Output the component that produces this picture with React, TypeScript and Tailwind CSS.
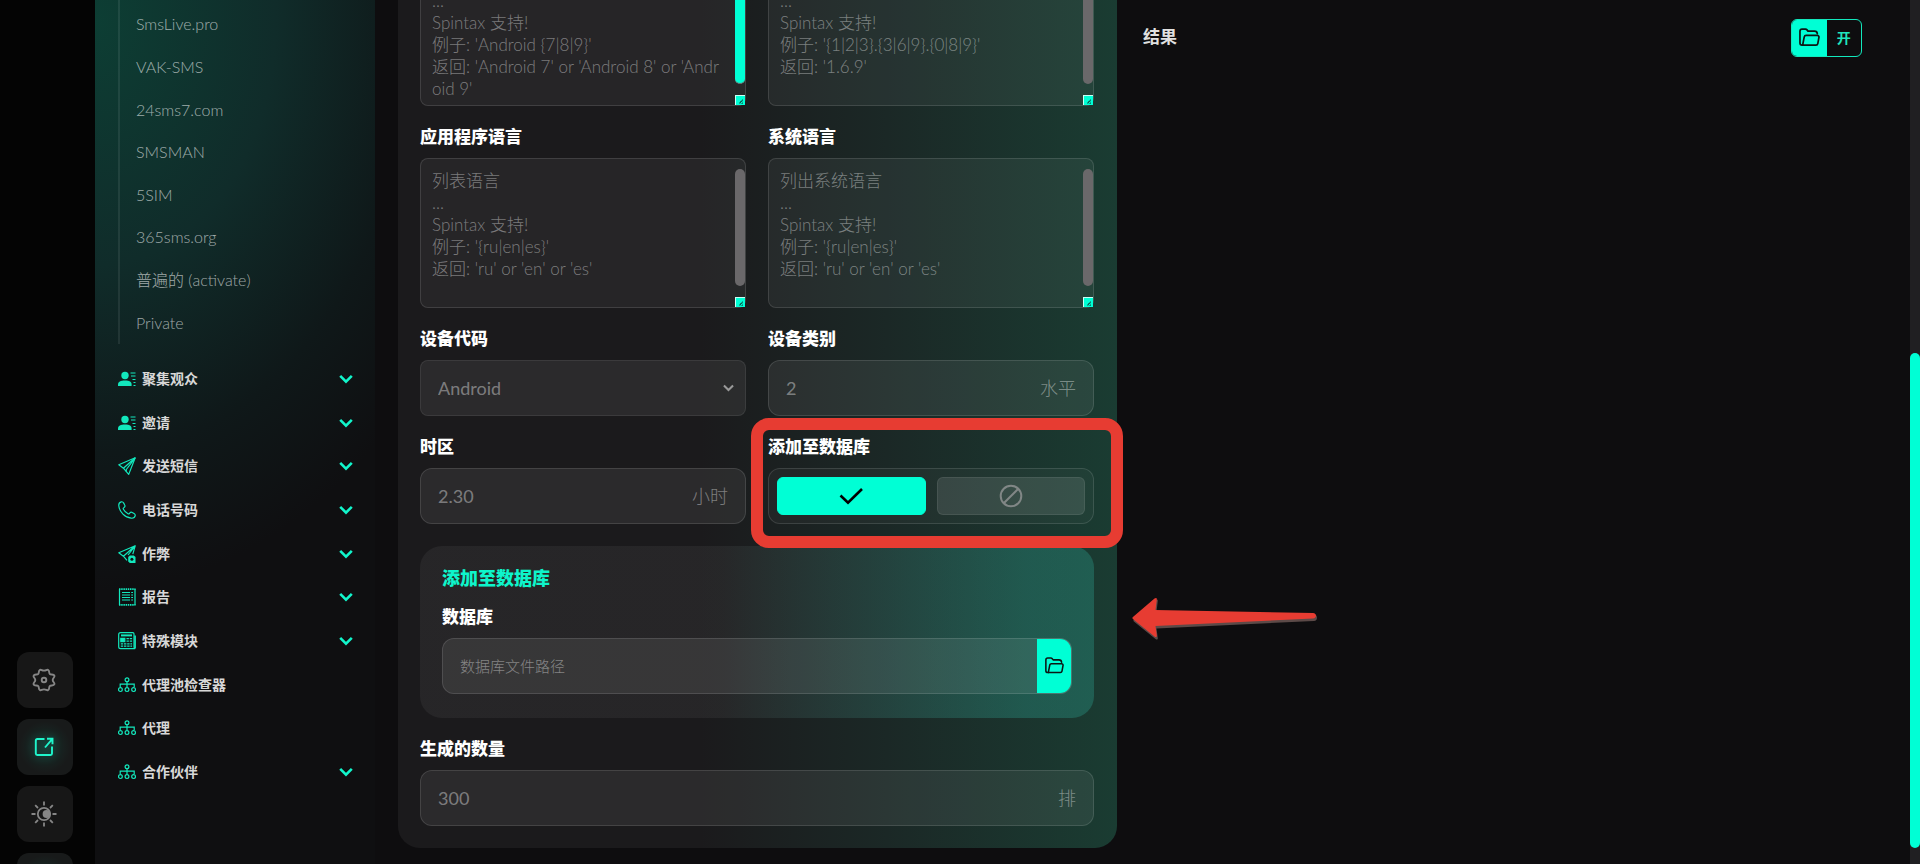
import { useState, type ReactNode } from "react";

interface MenuItem {
  label: string;
  icon: ReactNode;
  open?: boolean;
}

const services = [
  "SmsLive.pro",
  "VAK-SMS",
  "24sms7.com",
  "SMSMAN",
  "5SIM",
  "365sms.org",
  "普遍的 (activate)",
  "Private",
];

const Chevron = ({ className }: { className: string }) => (
  <svg viewBox="0 0 14 10" fill="none" stroke="currentColor" strokeWidth="2.6" className={className}>
    <path d="M1.2 1.8 7 7.6l5.8-5.8" />
  </svg>
);

const FolderIcon = ({ className }: { className: string }) => (
  <svg viewBox="0 0 22 20" fill="none" stroke="currentColor" strokeWidth="1.8" strokeLinejoin="round" strokeLinecap="round" className={className}>
    <path d="M4.3 18H3.2A2.2 2.2 0 0 1 1 15.800V3.400C1 2.100 1.900 1.200 3.200 1.200h3.600c.7 0 1.200.3 1.600.8l1 1.300h6.800c1.700 0 2.900 1 3 2.700" />
    <path d="M7.400 7.800h11.800c1.100 0 1.900.9 1.700 2l-1.200 6.600c-.2 1-1 1.600-1.900 1.600H3.800l1.700-8.700c.2-.9 1-1.500 1.900-1.500Z" />
  </svg>
);

const PersonIcon = () => (
  <svg viewBox="0 0 18 16" fill="currentColor" className="w-[18px]">
    <circle cx="7" cy="4.500" r="3.700" />
    <path d="M0 15v-1.500C0 10.600 2.600 9.500 7 9.500s6.600 1.100 6.600 4V15Z" />
    <path d="M12.500 1.500h5v1h-5zM13 4.500h4.500v1H13zM14.500 8h3v1h-3zM15.500 11h2v1h-2zM15.500 14h2v1h-2z" />
  </svg>
);

const PlaneIcon = () => (
  <svg viewBox="0 0 18 18" fill="none" stroke="currentColor" strokeWidth="1.200" strokeLinejoin="round" className="w-[18px]">
    <path d="M17.200.8.8 7.800l4.600 3.400 5.300 6.200L17.200.8Z" />
    <path d="M17.200.8 5.400 11.200M17.200.8 8.300 12.500l-.1 2" />
  </svg>
);

const CheatIcon = () => (
  <svg viewBox="0 0 18 18" className="w-[18px]">
    <g fill="none" stroke="currentColor" strokeWidth="1.200" strokeLinejoin="round">
      <path d="M10 10 17.200.8.8 7.800l4.600 3.400 3.600 4.200M17.200.8 5.400 11.200M17.200.8l-2.400 8.400" />
    </g>
    <path d="M10.200 12l1.600-1.500h4L17.500 12v6h-5.700l-1.600-1.600Z" fill="currentColor" />
    <circle cx="13.900" cy="14.200" r="1.500" fill="#0f1213" />
  </svg>
);

const PhoneIcon = () => (
  <svg viewBox="0 0 18 18" fill="none" stroke="currentColor" strokeWidth="1.200" strokeLinejoin="round" className="w-[18px]">
    <path d="M3.300.8c-1.500.3-2.700 2-2.500 4 .7 6.300 6.200 11.800 12.400 12.400 2 .2 3.700-1 4-2.500.2-1-.3-1.700-1.200-2.200l-1.800-1c-.9-.5-1.700-.3-2.300.4l-.6.7c-.3.4-.8.5-1.300.2a12 12 0 0 1-4.600-4.600c-.3-.5-.2-1 .2-1.300l.7-.6c.7-.6.9-1.400.4-2.300l-1-1.900C5.200 1.100 4.400.6 3.300.8Z" />
  </svg>
);

const ReportIcon = () => (
  <svg viewBox="0 0 18 18" fill="none" stroke="currentColor" strokeWidth="1.200" className="w-[18px]">
    <path d="M1.500 1v16M17 1v16" />
    <path d="M1 1.200h16.500M1 16.800h16.500" strokeWidth="1.800" strokeDasharray="1.500 .7" />
    <path d="M4 4.500h8M4 7h8M4 9.500h8M4 12h8M13.200 4.500h1.800M13.200 7h1.800M13.200 9.500h1.800M13.200 12h1.800" />
  </svg>
);

const ModuleIcon = () => (
  <svg viewBox="0 0 18 18" fill="none" stroke="currentColor" strokeWidth="1.200" className="w-[18px]">
    <path d="M16 2v13c0 1 .3 1.600 1.200 1.600H2.600c-1.200 0-1.900-.7-1.900-1.900V2.600C.7 1.400 1.400.7 2.600.7h12.100c.8 0 1.300.5 1.300 1.300ZM17.300 3.500v13" />
    <path d="M3 3.400h11" strokeWidth="2" />
    <path d="M2.800 6.400h4v3.200h-4z" fill="currentColor" />
    <path d="M8.500 6.600h5.600M8.500 9.200h5.600M2.800 11.800h11.300M2.800 14.200h11.300" strokeDasharray="2.400 .8" />
  </svg>
);

const TreeIcon = () => (
  <svg viewBox="0 0 18 16" fill="none" stroke="currentColor" strokeWidth="1.200" className="w-[18px]">
    <circle cx="9" cy="2.800" r="1.900" />
    <path d="M9 4.700V10M2.200 10V7.200h14V10" />
    <circle cx="2.400" cy="12.600" r="1.900" />
    <circle cx="9" cy="12.600" r="1.900" />
    <circle cx="15.600" cy="12.600" r="1.900" />
  </svg>
);

const GearIcon = () => (
  <svg viewBox="0 0 24 24" fill="none" stroke="currentColor" strokeWidth="1.900" strokeLinejoin="round" className="w-6">
    <path d="M8 1.900c1.200-.6 1.700.7 4 .7s2.800-1.300 4-.7c1.900.9.7 3 1.700 4 1.100 1.200 4-.1 4.700 1.800.6 1.700-1.700 2.200-1.700 4.300s2.300 2.600 1.700 4.300c-.7 1.900-3.600.6-4.700 1.800-1 1 .2 3.100-1.700 4-1.200.6-1.700-.7-4-.7s-2.800 1.300-4 .7c-1.900-.9-.7-3-1.700-4-1.100-1.200-4 .1-4.700-1.800C1 14.600 3.300 14.100 3.300 12S1 9.400 1.600 7.700c.7-1.900 3.600-.6 4.700-1.800 1-1-.2-3.100 1.700-4Z" />
    <circle cx="12" cy="12" r="2.300" />
  </svg>
);

const ShareIcon = () => (
  <svg viewBox="0 0 20 20" fill="none" stroke="currentColor" strokeWidth="1.900" className="w-5 drop-shadow-[0_0_5px_rgba(0,255,212,0.35)]">
    <path d="M10.500 2H3.200C2.400 2 1.800 2.600 1.800 3.400v13.200c0 .8.600 1.400 1.400 1.400h13.400c.8 0 1.400-.6 1.400-1.400V9.500" />
    <path d="M11 10.500 18.200 2.200M13 1.800h5.500v5.500" />
  </svg>
);

const SunIcon = () => (
  <svg viewBox="0 0 26 26" fill="none" stroke="currentColor" strokeWidth="1.800" className="w-[26px]">
    <circle cx="13" cy="13" r="6.200" />
    <circle cx="15.600" cy="13" r="4" fill="currentColor" stroke="none" />
    <path d="M13 .5v4M13 21.500v4M.5 13h4M21.500 13h4M4.200 4.200 7 7M19 19l2.800 2.800M4.200 21.800 7 19M19 7l2.800-2.800" />
  </svg>
);

const menu: MenuItem[] = [
  { label: "聚集观众", icon: <PersonIcon />, open: true },
  { label: "邀请", icon: <PersonIcon />, open: true },
  { label: "发送短信", icon: <PlaneIcon />, open: true },
  { label: "电话号码", icon: <PhoneIcon />, open: true },
  { label: "作弊", icon: <CheatIcon />, open: true },
  { label: "报告", icon: <ReportIcon />, open: true },
  { label: "特殊模块", icon: <ModuleIcon />, open: true },
  { label: "代理池检查器", icon: <TreeIcon /> },
  { label: "代理", icon: <TreeIcon /> },
  { label: "合作伙伴", icon: <TreeIcon />, open: true },
];

const Rail = () => (
  <aside className="flex h-full w-[95px] shrink-0 flex-col items-center justify-end bg-[#040404] pr-[5px]">
    <div className="-mb-[45px] flex flex-col gap-[11px] text-[#868686]">
      <button aria-label="Settings" className="flex size-14 items-center justify-center rounded-xl bg-[#171717] pr-0.5"><GearIcon /></button>
      <button aria-label="Share" className="flex size-14 items-center justify-center rounded-xl bg-[radial-gradient(circle,#18302b_0%,#181a1a_65%)] pr-0.5 text-[#1ff5cb]"><ShareIcon /></button>
      <button aria-label="Theme" className="flex size-14 items-center justify-center rounded-xl bg-[#171717] pr-0.5"><SunIcon /></button>
      <button aria-label="Language" className="size-14 rounded-xl bg-[radial-gradient(circle,#18302b_0%,#181a1a_65%)]" />
    </div>
  </aside>
);

const Sidebar = () => (
  <nav className="flex h-full w-[280px] shrink-0 flex-col justify-end bg-[#0f0f11] bg-[radial-gradient(ellipse_420px_570px_at_0_20px,#0d3e34_0%,#102c2a_43%,#0f1819_76%,#0f0f11_100%)] pr-[21px] pb-[70px] pl-[23px]">
    <div className="mb-[13px] shrink-0 border-l-2 border-white/8 pt-2 pl-4">
      <ul className="grid h-[341px] auto-rows-fr text-base font-light text-white/60">
        {services.map((name) => (
          <li key={name} className="flex items-center">
            <a href="#">{name}</a>
          </li>
        ))}
      </ul>
    </div>
    <ul className="grid h-[437px] shrink-0 auto-rows-fr">
      {menu.map((item) => (
        <li key={item.label} className="flex">
          <button className="flex w-full items-center text-sm font-bold text-[#d8d8d8]">
            <span className="mr-1.5 text-[#12e8bd]">{item.icon}</span>
            {item.label}
            {item.open && <Chevron className="mr-px ml-auto w-[14px] text-[#12f5cb]" />}
          </button>
        </li>
      ))}
    </ul>
  </nav>
);

interface FieldProps {
  id: string;
  label: string;
  children: ReactNode;
}

const Field = ({ id, label, children }: FieldProps) => (
  <div className="relative flex flex-col">
    <label htmlFor={id} className="mb-3 text-[17px] leading-[18px] font-black text-white">{label}</label>
    {children}
  </div>
);

interface AreaProps {
  id: string;
  label: string;
  hint: string;
  hot?: boolean;
}

const AreaField = ({ id, label, hint, hot }: AreaProps) => (
  <Field id={id} label={label}>
    <div className="relative">
      <textarea
        id={id}
        placeholder={hint}
        className="block h-[150px] w-full resize-none overflow-hidden rounded-lg border border-white/12 bg-white/5 py-[11px] pr-6 pl-[11px] text-[17px] leading-[22px] font-light break-all outline-none placeholder:text-white/40"
      />
      <div className="absolute top-[11px] right-px bottom-[22px] w-[10px] rounded-full bg-[#6a686a]">
        {hot && <div className="h-full rounded-full border-b border-[#6a686a] bg-[#00ffd5]" />}
      </div>
      <svg viewBox="0 0 10 10" className="absolute right-px bottom-px size-[10px]">
        <path d="M0 0h10v10H0z" fill="#c9fff4" />
        <path d="M1 1h9v9H1z" fill="#00ffd5" />
        <path d="M4 8h1.500V6.500H7V5h1M7 9V8h1" stroke="#0b5d50" strokeWidth="1" fill="none" />
      </svg>
    </div>
  </Field>
);

const UnitField = ({ id, label, hint, unit }: { id: string; label: string; hint: string; unit: string }) => (
  <Field id={id} label={label}>
    <div className="flex h-14 items-center rounded-xl border border-white/12 bg-white/7 px-[17px] text-lg font-light text-white/40">
      <input id={id} type="text" placeholder={hint} className="min-w-0 flex-1 outline-none placeholder:font-normal placeholder:text-white/40" />
      <span>{unit}</span>
    </div>
  </Field>
);

export default function App() {
  const [addToBase, setAddToBase] = useState(true);

  return (
    <div className="flex h-screen overflow-hidden bg-[#0e0d0f] font-['Lato','Noto_Sans_CJK_SC',sans-serif]">
      <Rail />
      <Sidebar />

      <main className="grid h-full flex-1 grid-cols-2 gap-[26px] pr-12 pl-[23px]">
        <div className="flex h-screen flex-col justify-end pb-4">
          <form className="flex shrink-0 flex-col gap-[22px] rounded-[22px] bg-[linear-gradient(90deg,#1b1a1c_0%,#1b1a1c_42%,#1b2826_68%,#1a3c32_100%)] py-[22px] pr-[23px] pl-[22px]">
            <div className="grid grid-cols-2 gap-[22px]">
              <AreaField
                id="system-version"
                label="系统版本"
                hint={"列出系统版本\n...\nSpintax 支持!\n例子: 'Android {7|8|9}'\n返回: 'Android 7' or 'Android 8' or 'Android 9'"}
                hot
              />
              <AreaField
                id="app-version"
                label="应用程序版本"
                hint={"列出应用程序版本\n...\nSpintax 支持!\n例子: '{1|2|3}.{3|6|9}.{0|8|9}'\n返回: '1.6.9'"}
              />
              <AreaField
                id="app-lang"
                label="应用程序语言"
                hint={"列表语言\n...\nSpintax 支持!\n例子: '{ru|en|es}'\n返回: 'ru' or 'en' or 'es'"}
              />
              <AreaField
                id="system-lang"
                label="系统语言"
                hint={"列出系统语言\n...\nSpintax 支持!\n例子: '{ru|en|es}'\n返回: 'ru' or 'en' or 'es'"}
              />

              <Field id="device-code" label="设备代码">
                <div className="relative">
                  <select id="device-code" className="block h-14 w-full appearance-none rounded-lg border border-white/8 bg-white/7 px-[17px] text-lg text-white/40 outline-none">
                    <option>Android</option>
                  </select>
                  <Chevron className="pointer-events-none absolute top-6 right-3 w-[11px] text-[#999999]" />
                </div>
              </Field>
              <UnitField id="device-class" label="设备类别" hint="2" unit="水平" />

              <UnitField id="timezone" label="时区" hint="2.30" unit="小时" />
              <Field id="add-base" label="添加至数据库">
                <div className="flex h-14 items-center gap-[11px] rounded-xl border border-white/12 bg-white/3 px-2">
                  <button
                    id="add-base"
                    type="button"
                    aria-label="Yes"
                    onClick={() => setAddToBase(true)}
                    className={addToBase ? "flex h-[38px] flex-1 items-center justify-center rounded-md border border-[#00ffd5] bg-[#00ffd5] text-black" : "flex h-[38px] flex-1 items-center justify-center rounded-md border border-white/8 bg-white/10 text-[#818786]"}
                  >
                    <svg viewBox="0 0 24 18" fill="none" stroke="currentColor" strokeWidth="2.600" className="w-6">
                      <path d="m1.500 8.500 7.500 7.200L23 2" />
                    </svg>
                  </button>
                  <button
                    type="button"
                    aria-label="No"
                    onClick={() => setAddToBase(false)}
                    className={addToBase ? "flex h-[38px] flex-1 items-center justify-center rounded-md border border-white/8 bg-white/10 text-[#818786]" : "flex h-[38px] flex-1 items-center justify-center rounded-md border border-[#00ffd5] bg-[#00ffd5] text-black"}
                  >
                    <svg viewBox="0 0 24 24" fill="none" stroke="currentColor" strokeWidth="2" className="w-6">
                      <circle cx="12" cy="12" r="10.300" />
                      <path d="M4.700 19.300 19.300 4.700" />
                    </svg>
                  </button>
                </div>
                <div className="pointer-events-none absolute -top-5 -right-[29px] -bottom-6 -left-[17px] z-10 rounded-[18px] border-[12px] border-[#e73c32]" />
              </Field>
            </div>

            <section className="relative flex flex-col rounded-[22px] bg-[linear-gradient(90deg,rgba(255,255,255,0.05)_45%,rgba(50,200,180,0.25)_90%)] px-[22px] pt-[22px] pb-6">
              <h2 className="mb-5 text-lg leading-5 font-black text-[#0ef5cb]">添加至数据库</h2>
              <Field id="base-path" label="数据库">
                <div className="flex h-14 overflow-hidden rounded-xl border border-white/12 bg-white/8">
                  <input id="base-path" type="text" placeholder="数据库文件路径" className="min-w-0 flex-1 px-[17px] text-[15px] font-light outline-none placeholder:text-white/40" />
                  <button type="button" aria-label="Browse" className="flex w-[34px] items-center justify-center bg-[#00ffd5] text-[#0c1714]">
                    <FolderIcon className="w-[19px]" />
                  </button>
                </div>
              </Field>
              <svg viewBox="0 0 186 44" className="absolute top-[50px] left-full ml-[37px] w-[186px]">
                <path d="m2.500 21.500 21-19c1.500-1.200 2.500-.5 2.300 1L24.500 14 182 17c4 .3 4 6 0 6.500L24.500 31l1.300 9.500c.2 1.500-1 2.200-2.300 1l-21-17c-1.500-1-1.500-2 0-3Z" fill="#5c4a48" transform="translate(1 1.500)" />
                <path d="m2.500 20.500 21-18c1.500-1.200 2.500-.5 2.300 1L24.500 14 182 17c4 .3 4 5 0 5.500L24.500 30l1.300 9.500c.2 1.500-1 2.200-2.300 1l-21-17c-1.500-1-1.500-2 0-3Z" fill="#e73c32" />
              </svg>
            </section>

            <UnitField id="amount" label="生成的数量" hint="300" unit="排" />
          </form>
        </div>

        <section className="flex items-start justify-between pt-[19px]">
          <h2 className="text-[17px] leading-9 font-bold text-[#e0e0e0]">结果</h2>
          <div className="flex h-[38px] w-[71px] overflow-hidden rounded-md border border-[#12e8bd]">
            <button aria-label="Open folder" className="flex flex-1 items-center justify-center bg-[#00ffd5] text-[#0c1714]">
              <FolderIcon className="w-[21px]" />
            </button>
            <button className="flex-1 text-sm font-bold text-[#20e5bd]">开</button>
          </div>
        </section>
      </main>

      <div className="flex h-full w-[10px] shrink-0 flex-col justify-end bg-[#201f22] pb-4">
        <div className="h-[58.4%] rounded-full bg-[#00ffd5]" />
      </div>
    </div>
  );
}
